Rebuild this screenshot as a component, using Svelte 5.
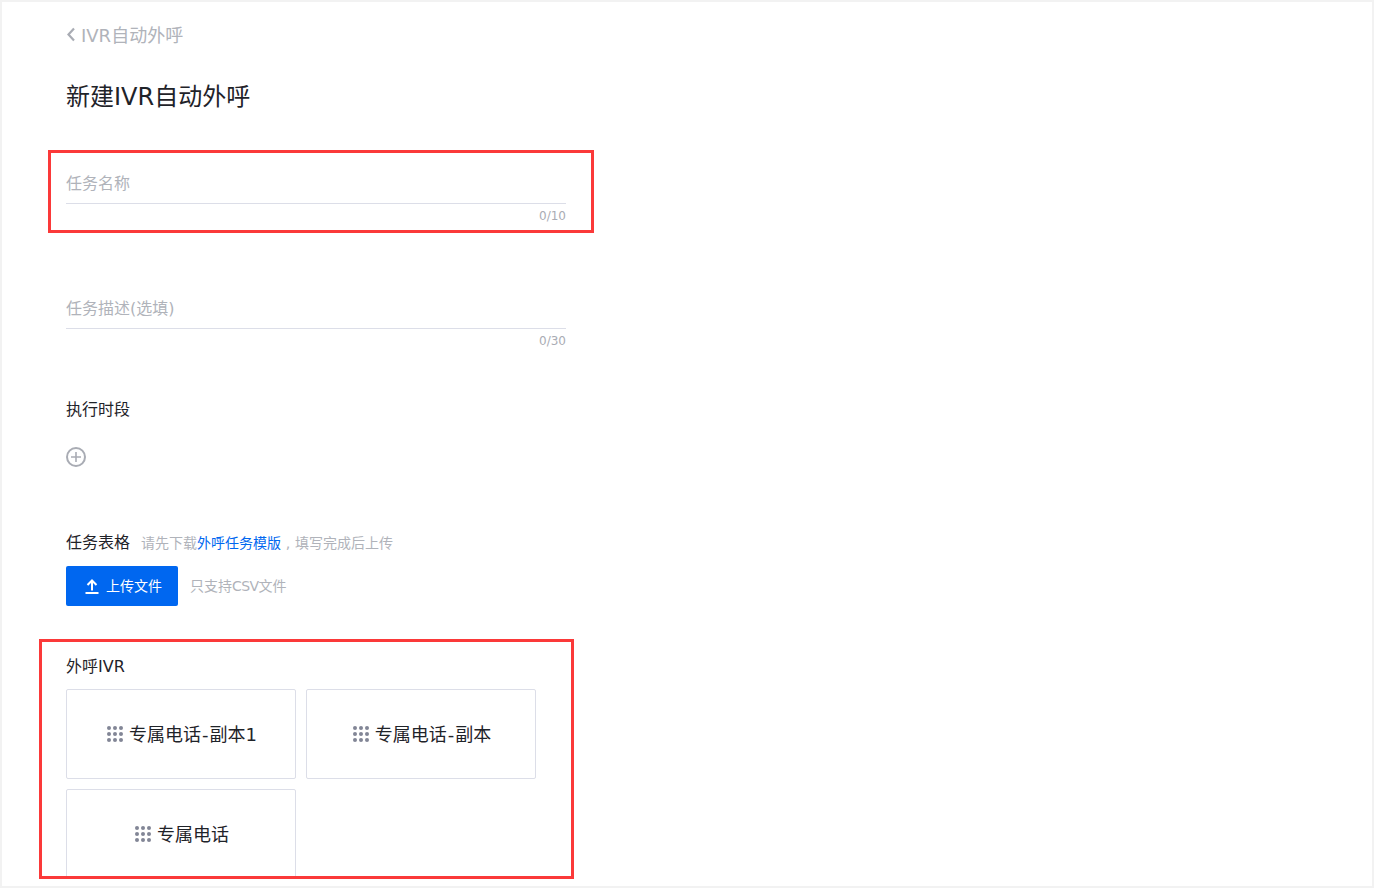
<script>
  const ivrs = ["专属电话-副本1", "专属电话-副本", "专属电话"];
  const dots = [0, 1, 2, 3, 4, 5, 6, 7, 8];
</script>

<div class="page">
  <a class="back">
    <svg class="back-icon" width="10" height="16" viewBox="0 0 10 16">
      <path d="M8 2.5 L2.5 8.5 L8 14.5" fill="none" stroke="#a9acb4" stroke-width="2.2" />
    </svg>
    IVR自动外呼
  </a>
  <h1>新建IVR自动外呼</h1>

  <div class="field first">
    <div class="placeholder">任务名称</div>
    <div class="count">0/10</div>
  </div>
  <div class="field second">
    <div class="placeholder">任务描述(选填)</div>
    <div class="count">0/30</div>
  </div>

  <div class="label time">执行时段</div>
  <svg class="plus" width="20" height="20" viewBox="0 0 20 20">
    <circle cx="10" cy="10" r="9" fill="none" stroke="#a9acb4" stroke-width="2" />
    <path d="M10 5 V15 M5 10 H15" stroke="#a9acb4" stroke-width="1.6" />
  </svg>

  <div class="table-head">
    <span class="label">任务表格</span>
    <span class="hint tip">请先下载<span class="link">外呼任务模版</span><span class="comma">,</span>填写完成后上传</span>
  </div>
  <div class="upload">
    <button>
      <svg width="16" height="16" viewBox="0 0 16 16">
        <path d="M8 12.5 V2.5 M3.5 7 L8 2.5 L12.5 7 M1.5 15 H14.5" fill="none" stroke="#fff" stroke-width="2" />
      </svg>
      <span class="up-text">上传文件</span>
    </button>
    <span class="hint csv-tip">只支持<span class="csv">CSV</span>文件</span>
  </div>

  <div class="label ivr">外呼IVR</div>
  <div class="cards">
    {#each ivrs as name}
      <div class="card">
        <span class="dots">
          {#each dots as d}<i></i>{/each}
        </span>
        <span class="name">
          {#each name.split("-") as part, i}{#if i}<span class="dash">-</span>{/if}{part}{/each}
        </span>
      </div>
    {/each}
  </div>

  <div class="mark mark-a"></div>
  <div class="mark mark-b"></div>
</div>

<style>
  :global(body) {
    margin: 0;
    background: #fff;
  }

  .page {
    position: relative;
    box-sizing: border-box;
    width: 1374px;
    height: 888px;
    overflow: hidden;
    border: 2px solid #f2f2f2;
    padding-left: 64px;
    font-family: "DejaVu Sans", "Noto Sans CJK SC", sans-serif;
    color: #1f2329;
  }

  .back {
    display: flex;
    align-items: center;
    gap: 5px;
    height: 26px;
    margin-top: 19px;
    font-size: 18px;
    color: #b0b3ba;
  }

  h1 {
    margin: 30px 0 0;
    height: 36px;
    font-size: 24px;
    line-height: 40px;
    font-weight: 400;
  }

  .field {
    width: 500px;
  }

  .first {
    margin-top: 52px;
  }

  .second {
    margin-top: 62px;
  }

  .placeholder {
    height: 38px;
    line-height: 38px;
    font-size: 16px;
    color: #b0b3ba;
    border-bottom: 1px solid #dcdee8;
  }

  .count {
    height: 24px;
    line-height: 25px;
    font-size: 12px;
    text-align: right;
    color: #a9acb4;
  }

  .label {
    height: 24px;
    font-size: 16px;
    line-height: 28px;
    color: #1f2329;
  }

  .time {
    margin-top: 43px;
  }

  .plus {
    display: block;
    margin-top: 27px;
  }

  .table-head {
    display: flex;
    align-items: center;
    gap: 11px;
    margin-top: 62px;
    height: 24px;
  }

  .hint {
    font-size: 14px;
    color: #b0b3ba;
  }

  .tip {
    margin-top: 2px;
  }

  .link {
    color: #0067f0;
  }

  .comma {
    display: inline-block;
    width: 14px;
    text-align: center;
  }

  .upload {
    display: flex;
    align-items: center;
    gap: 12px;
    margin-top: 13px;
  }

  .csv-tip {
    margin-bottom: 2px;
  }

  .csv {
    letter-spacing: -0.6px;
  }

  button {
    display: flex;
    align-items: center;
    justify-content: center;
    gap: 6px;
    width: 112px;
    height: 40px;
    padding: 0 0 0 2px;
    border: none;
    border-radius: 2px;
    background: #0067f0;
    color: #fff;
    font-family: inherit;
    font-size: 14px;
  }

  .up-text {
    margin-bottom: 2px;
  }

  .ivr {
    margin-top: 47px;
  }

  .cards {
    display: grid;
    grid-template-columns: 230px 230px;
    grid-auto-rows: 90px;
    gap: 10px;
    margin-top: 12px;
  }

  .card {
    display: flex;
    align-items: center;
    justify-content: center;
    gap: 6px;
    box-sizing: border-box;
    padding-left: 2px;
    border: 1px solid #dcdee8;
    border-radius: 2px;
    font-size: 18px;
  }

  .name {
    margin-bottom: 2px;
  }

  .dash {
    margin: 0 1px;
  }

  .dots {
    display: grid;
    grid-template-columns: repeat(3, 4px);
    grid-auto-rows: 4px;
    gap: 2px;
  }

  .dots i {
    border-radius: 50%;
    background: #828696;
  }

  .mark {
    position: absolute;
    box-sizing: border-box;
    border: 3px solid #fb3939;
  }

  .mark-a {
    left: 46px;
    top: 148px;
    width: 546px;
    height: 83px;
  }

  .mark-b {
    left: 37px;
    top: 637px;
    width: 535px;
    height: 240px;
  }
</style>
